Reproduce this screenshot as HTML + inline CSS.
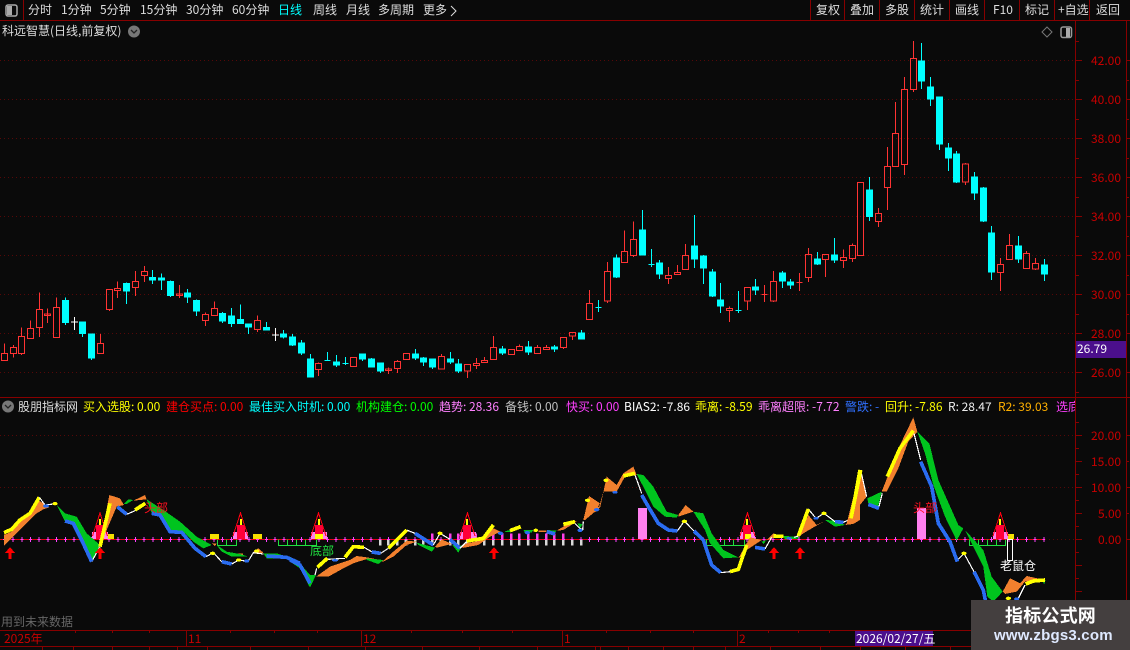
<!DOCTYPE html>
<html><head><meta charset="utf-8"><style>
html,body{margin:0;padding:0;background:#0a0a0a;width:1130px;height:650px;overflow:hidden}
#p{position:absolute;left:0;top:0;width:1130px;height:650px;overflow:hidden;background:#0a0a0a;font:12px/14px "WenQuanYi Zen Hei","Noto Sans CJK SC",sans-serif;color:#ddd}
#p span,#p b.t{position:absolute;white-space:nowrap;font-weight:normal}
svg{position:absolute;left:0;top:0}
.r{fill:none;stroke:#ff3333;stroke-width:3}
.c{fill:#0ff;stroke:#0ff;stroke-width:3}
.w{fill:none;stroke:#fff;stroke-width:3}
.o{fill:#f2802e}.g{fill:#00c41e}
.bl{fill:none;stroke:#2a6cf0;stroke-width:11;stroke-linejoin:round}
.y{fill:none;stroke:#ff0;stroke-width:11;stroke-linejoin:round}
.wl{fill:none;stroke:#fff;stroke-width:3.5}
.eb{fill:#2a6cf0}.ey{fill:#ff0}
.ax{color:#c80000}
#h{position:absolute;left:0;top:400px;width:1075px;height:14px;overflow:hidden}
</style></head><body><div id="p">

<svg width="1130" height="650" shape-rendering="crispEdges">
 <!-- grid -->
 <g stroke="#560808" stroke-dasharray="1 3" fill="none">
  <path d="M0 60.5H1075M0 99.5H1075M0 138.5H1075M0 177.5H1075M0 216.5H1075M0 255.5H1075M0 294.5H1075M0 333.5H1075M0 372.5H1075M0 435.5H1075M0 487.5H1075M1045 539.5H1075"/>
 </g>
 <!-- frame -->
 <g stroke="#870000" fill="none">
  <path d="M0 20.5H1130M0 397.5H1130M0 630.5H1130M0 646.5H1130M23.5 0V20M810.5 0V20M844.5 0V20M879.5 0V20M914.5 0V20M949.5 0V20M984.5 0V20M1019.5 0V20M1054.5 0V20M1089.5 0V20M1075.5 21V630M1126.5 21V650M186.5 630V646M361.5 630V646M562.5 630V646M737.5 630V646"/>
  <path d="M1075 60.5h7M1075 99.5h7M1075 138.5h7M1075 177.5h7M1075 216.5h7M1075 255.5h7M1075 294.5h7M1075 333.5h7M1075 372.5h7M1075 80.5h4M1075 119.5h4M1075 158.5h4M1075 197.5h4M1075 236.5h4M1075 275.5h4M1075 314.5h4M1075 353.5h4M1075 392.5h4M1075 41.5h4M1075 435.5h7M1075 461.5h7M1075 487.5h7M1075 513.5h7M1075 539.5h7M1075 565.5h7M1075 591.5h7M1075 422.5h4M1075 448.5h4M1075 474.5h4M1075 500.5h4M1075 526.5h4M1075 552.5h4M1075 578.5h4M1075 604.5h4M1127 60.5h3M1127 99.5h3M1127 138.5h3M1127 177.5h3M1127 216.5h3M1127 255.5h3M1127 294.5h3M1127 333.5h3M1127 372.5h3M1127 80.5h2M1127 119.5h2M1127 158.5h2M1127 197.5h2M1127 236.5h2M1127 275.5h2M1127 314.5h2M1127 435.5h3M1127 487.5h3M1127 539.5h3M1127 461.5h2M1127 513.5h2M75.5 630v3M112.5 630v3M149.5 630v3M230.5 630v3M274.5 630v3M317.5 630v3M411.5 630v3M462.5 630v3M512.5 630v3M606.5 630v3M650.5 630v3M693.5 630v3M768.5 630v3M798.5 630v3M829.5 630v3M42.5 646v4M73.5 646v4M112.5 646v4M149.5 646v4M177.5 646v4M207.5 646v4M250.5 646v4M308.5 646v4M365.5 646v4M422.5 646v4M479.5 646v4M537.5 646v4M595.5 646v4M600.5 646v4M628.5 646v4M663.5 646v4M693.5 646v4M725.5 646v4M770.5 646v4M820.5 646v4M860.5 646v4M905.5 646v4M950.5 646v4"/>
 </g>

 <!-- candles part 1 -->
 <g transform="translate(0 260) scale(.33333)">
  <path class="r" d="M13 250V280M4 280h18v22h-18zM40 255V262M31 262h18v19h-18zM40 281V293M64 202V229M55 229h18v52h-18zM64 281V285M91 181V205M82 205h18v31h-18zM118 97V148M109 148h18v55h-18zM118 203V231M142 145V189M133 162h18v5h-18zM169 112V142M160 142h18v91h-18zM301 222V250M292 250h18v31h-18zM319 88h18v61h-18zM328 149V153M352 64V85M343 85h18v7h-18zM352 92V114M406 33V64M397 64h18v19h-18zM406 83V108M433 18V34M424 34h18v13h-18zM433 47V66M538 75V114M529 102h18v5h-18zM616 157V163M607 163h18v19h-18zM616 182V198M643 124V145M634 145h18v22h-18zM772 166V181M763 181h18v28h-18zM772 209V216"/>
  <path class="c" d="M196 112V195M187 121h18v67h-18zM247 186V231M238 186h18v35h-18zM274 222V300M265 222h18v72h-18zM379 67V132M370 70h18v23h-18zM457 30V72M448 52h18v8h-18zM484 40V90M475 54h18v6h-18zM511 62V111M502 64h18v43h-18zM562 87V129M553 99h18v12h-18zM589 118V168M580 121h18v32h-18zM667 156V189M658 160h18v23h-18zM694 144V201M685 168h18v23h-18zM721 133V192M712 178h18v12h-18zM745 190V222M736 192h18v9h-18zM799 186V210M790 202h18v8h-18zM850 210V236M841 222h18v9h-18zM877 222V258M868 231h18v24h-18z"/>
  <path class="w" d="M223 171V210M213 186.5h21M826 204V243M816 225h21"/>
 </g>
 <!-- candles part 2 -->
 <g transform="translate(300 200) scale(.33333)">
  <path class="c" d="M5 420V465M-4 429h18v30h-18zM31 462V531M22 477h18v54h-18zM82 456V483M73 482h18M109 465V501M100 486h18v9h-18zM136 471V495M127 490h18M187 462V483M178 462h18v15h-18zM214 474V501M205 477h18v24h-18zM241 489V519M232 489h18v24h-18zM346 447V480M337 462h18v12h-18zM370 471V498M361 474h18v12h-18zM397 477V507M388 477h18v24h-18zM451 456V492M442 477h18v9h-18zM475 477V519M466 492h18v21h-18zM607 438V465M598 447h18v12h-18zM685 423V465M676 441h18v15h-18zM763 435V456M754 441h18v6h-18zM844 390V417M835 399h18v18h-18zM895 300V336M886 322h18"/>
  <path class="r" d="M55 488V490M46 490h18v19h-18zM55 509V528M151 472h18v28h-18zM265 502V522M256 507h18v5h-18zM292 480V484M283 484h18v22h-18zM292 506V519M310 460h18v19h-18zM424 462V469M415 469h18v38h-18zM493 493h18v20h-18zM502 513V534M529 474V490M520 490h18v7h-18zM529 497V507M553 471V481M544 481h18v7h-18zM580 408V442M571 442h18v37h-18zM625 448h18v16h-18zM658 433V439M649 439h18v13h-18zM712 435V442M703 442h18v19h-18zM739 435V442M730 442h18v7h-18zM781 412h18v31h-18zM790 443V447M808 397h18v11h-18zM817 408V420M868 270V310M859 310h18v49h-18z"/>
 </g>
 <!-- candles part 3 -->
 <g transform="translate(590 200) scale(.33333)">
  <path class="r" d="M52 186V214M43 214h18v89h-18zM52 303V309M103 91V154M94 154h18v34h-18zM130 64V118M121 118h18v49h-18zM130 167V171M235 201V226M226 226h18v9h-18zM235 235V252M262 195V217M253 217h18v7h-18zM286 132V166M277 166h18v43h-18zM418 319V325M409 325h18v7h-18zM418 332V366M463 262h18v41h-18zM472 303V330M523 255V306M514 284h18M550 213V244M541 244h18v59h-18zM550 303V306M628 219V273M619 247h18M655 144V163M646 163h18v70h-18zM655 233V246M697 163h18v16h-18zM706 179V231M760 148V172M751 172h18v10h-18zM760 182V204M787 130V136M778 136h18v40h-18zM787 176V186"/>
  <path class="c" d="M79 163V234M70 174h18v57h-18zM157 30V165M148 90h18v75h-18zM184 147V201M175 193h18M208 180V237M199 189h18v33h-18zM313 45V204M304 138h18v39h-18zM340 165V252M331 168h18v36h-18zM367 207V291M358 216h18v72h-18zM391 249V339M382 300h18v18h-18zM445 273V339M436 331h18M496 237V285M487 261h18v9h-18zM577 213V264M568 219h18v24h-18zM601 237V267M592 246h18v9h-18zM682 156V195M673 177h18v15h-18zM733 114V189M724 165h18v15h-18z"/>
 </g>
 <!-- candles part 4 -->
 <g transform="translate(830 30) scale(.33333)">
  <path class="r" d="M82 457h18v220h-18zM145 534V550M136 550h18v25h-18zM145 575V591M172 351V409M163 409h18v63h-18zM172 472V540M196 216V310M187 310h18v100h-18zM223 141V178M214 178h18v226h-18zM223 404V435M250 33V85M241 85h18v94h-18zM250 179V186M406 399V402M397 402h18v54h-18zM406 456V465M511 684V703M502 703h18v24h-18zM511 727V783M538 612V646M529 646h18v43h-18zM589 663V670M580 670h18v46h-18zM616 684V700M607 700h18v17h-18zM616 717V720"/>
  <path class="c" d="M118 441V573M109 480h18v80h-18zM274 39V177M265 93h18v60h-18zM301 141V228M292 171h18v36h-18zM328 201V360M319 201h18v141h-18zM355 339V423M346 354h18v30h-18zM379 363V459M370 372h18v84h-18zM433 426V510M424 441h18v48h-18zM460 471V576M451 474h18v99h-18zM484 588V750M475 609h18v117h-18zM565 618V699M556 648h18v39h-18zM643 687V753M634 705h18v27h-18z"/>
 </g>

 <!-- zero line -->
 <path d="M0 539.5H1045" stroke="#e00010"/>
 <path d="M3.8 539.5H1045" stroke="#ff40ff" stroke-width="5" stroke-dasharray="1 7.735"/>
 <path d="M2.8 539.5H1045" stroke="#ff40ff" stroke-dasharray="3 5.735"/>

 <!-- big pink bars -->
 <path d="M638 508h9v31h-9zM917 508h9v31h-9z" fill="#ff80ee"/>

 <!-- small bars -->
 <g transform="translate(290 480) scale(.33333)">
  <path fill="#d8d8d8" d="M267 180h8v16h-8zM291 180h8v16h-8zM318 180h8v16h-8zM344 180h8v16h-8zM372 180h8v16h-8zM396 180h8v16h-8zM423 180h8v16h-8zM449 180h8v16h-8zM477 180h8v16h-8zM501 180h8v16h-8zM528 180h8v16h-8zM553 180h8v16h-8zM579 180h8v16h-8zM606 180h8v16h-8zM633 180h8v16h-8zM660 180h8v16h-8zM684 180h8v16h-8zM711 180h8v16h-8zM738 180h8v16h-8zM765 180h8v16h-8zM789 180h8v16h-8zM816 180h8v16h-8zM843 180h8v16h-8zM870 180h8v16h-8z"/>
  <path fill="#ff40e8" d="M423 160h8v18h-8zM477 160h8v18h-8zM501 160h8v18h-8zM528 160h8v18h-8zM553 160h8v18h-8zM606 160h8v18h-8zM633 160h8v18h-8zM660 160h8v18h-8zM684 160h8v18h-8zM711 160h8v18h-8zM738 160h8v18h-8zM765 160h8v18h-8zM789 160h8v18h-8zM816 160h8v18h-8z"/>
 </g>

 <!-- green hollow boxes -->
 <path fill="none" stroke="#20e040" d="M217.5 539.5v6h19v-6M226.5 539.5v6M278.5 539.5v6h38v-6M287.5 539.5v6M296.5 539.5v6M305.5 539.5v6M706.5 539.5v6h38v-6M715.5 539.5v6M724.5 539.5v6M733.5 539.5v6M969.5 539.5v6h36v-6M978.5 539.5v6M987.5 539.5v6M996.5 539.5v6"/>

 <!-- gold squares -->
 <path fill="#f5e000" d="M106 534h8v5h-8zM210 534h9v5h-9zM253 534h9v5h-9zM1006 534h8v5h-8z"/>

 <!-- tents -->
 <g id="tents">
  <path fill="#ff80ee" d="M92 532h16v7H92zM233 532h15v7h-15zM311 532h16v7h-16zM460 532h16v7h-16zM740 532h15v7h-15zM993 532h15v7h-15z"/>
  <path fill="#ff0038" d="M96 525h8v14h-8zM237 525h8v14h-8zM315 525h8v14h-8zM463 525h8v14h-8zM743 525h8v14h-8zM996 525h8v14h-8z"/>
  <path fill="#ff0" d="M99 519h2v6h-2zM240 519h2v6h-2zM318 519h2v6h-2zM466 519h2v6h-2zM746 519h2v6h-2zM999 519h2v6h-2zM315 534h8v5h-8zM745 534h6v5h-6z"/>
  <path fill="none" stroke="#ff0010" d="M92.500 536L100 513L107.500 536M233 536L240.500 513L248 536M311 536L318.500 513L326 536M460 536L467.500 513L475 536M740 536L747.500 513L755 536M993 536L1000.500 513L1008 536"/>
 </g>

 <!-- ribbons -->
 <g transform="translate(0 480) scale(.33333)">
  <path class="o" d="M12 198L12 165L35 155L60 125L90 105L118 62L130 70L148 82L130 88L110 100L60 150Z"/>
  <path class="g" d="M170 75L195 100L230 110L260 160L300 195L275 245L250 190L225 135L195 125Z"/>
  <path class="o" d="M298 200L328 45L360 55L372 75L350 80L320 150Z"/>
  <path class="g" d="M372 72L385 58L400 60L380 72ZM440 58L490 90L540 125L590 170L635 195L610 205L580 185L550 155L510 158L495 125L480 105L455 100Z"/>
  <path class="o" d="M400 62L435 45L440 58ZM635 190L650 190L645 198ZM712 220L730 220L728 226ZM760 215L775 205L790 218L770 222Z"/>
  <path class="g" d="M650 195L680 215L720 222L745 230L695 230L665 215ZM790 220L830 220L860 230L900 262L860 235L800 235Z"/>
  <path class="y" d="M12 158L35 148L60 120L90 100L118 52"/>
  <path class="wl" d="M118 52L135 75L160 72M275 245L300 200M380 103L410 90M618 230L640 218L665 245M695 252L716 240L735 243M745 243L760 218L790 222"/>
  <ellipse class="eb" cx="138" cy="78" rx="9" ry="5"/><ellipse class="ey" cx="165" cy="71" rx="8" ry="5"/>
  <path class="bl" d="M195 123L220 130L245 180L275 245M352 80L380 103M455 100L480 105L510 155L545 157L585 205L618 230M665 245L695 252M800 228L860 232L900 250"/>
  <path class="y" d="M300 200L330 70M405 90L436 70"/>
  <ellipse class="ey" cx="638" cy="220" rx="8" ry="5"/><ellipse class="ey" cx="716" cy="240" rx="8" ry="5"/><ellipse class="eb" cx="740" cy="243" rx="7" ry="5"/>
  <ellipse class="ey" cx="770" cy="213" rx="8" ry="5"/>
 </g>
 <g transform="translate(290 480) scale(.33333)">
  <path class="g" d="M0 235L30 250L60 285L78 285L60 323L30 265L0 245Z"/>
  <path class="o" d="M78 290L120 260L180 240L200 228L230 232L280 242L310 215L350 182L380 185L350 195L310 230L280 245L230 237L190 250L160 265L115 290Z"/>
  <path class="g" d="M230 235L280 240L265 252L230 240ZM380 188L435 203L425 215L385 195ZM487 195L517 197L505 218ZM862 130L878 132L870 145Z"/>
  <path class="o" d="M435 200L455 178L485 192L440 203ZM517 197L530 190L580 180L610 145L632 155L600 170L565 195L517 204ZM800 152L850 122L860 125L820 150ZM880 120L897 48L930 70L915 95L885 120Z"/>
  <path class="g" d="M640 155L660 150L665 156ZM700 150L730 150L725 158L705 158ZM770 150L800 152L795 158Z"/>
  <path class="o" d="M745 151L770 151L768 156L745 156Z"/>
  <path class="bl" d="M0 240L30 255L60 310M245 216L272 220M375 160L430 195M480 178L510 205M770 155L795 162"/>
  <path class="wl" d="M75 285L80 265M112 238L165 235M222 202L245 215M272 220L295 205M350 150L375 160M430 195L450 160L480 178M510 205L530 185M850 125L870 145L878 150L880 125"/>
  <path class="y" d="M82 262L112 235M165 232L190 200L222 202M295 205L350 150M530 183L580 175L610 135M660 152L692 140M820 133L855 125"/>
  <ellipse class="eb" cx="135" cy="241" rx="9" ry="4"/><ellipse class="ey" cx="450" cy="160" rx="8" ry="5"/><ellipse class="eb" cx="632" cy="160" rx="8" ry="5"/><ellipse class="eb" cx="712" cy="158" rx="8" ry="5"/><ellipse class="ey" cx="737" cy="151" rx="7" ry="5"/><ellipse class="eb" cx="870" cy="151" rx="8" ry="5"/><ellipse class="ey" cx="893" cy="61" rx="8" ry="5"/><ellipse class="eb" cx="920" cy="88" rx="8" ry="5"/>
 </g>
 <g transform="translate(590 450) scale(.33333)">
  <path class="o" d="M0 145L30 175L50 80L80 105L100 70L130 50L140 75L105 80L80 125L40 125L25 180L0 195Z"/>
  <path class="g" d="M140 72L160 75L190 110L230 185L265 195L260 203L225 200L190 170L165 120Z"/>
  <path class="o" d="M265 195L287 165L310 185L265 200Z"/>
  <path class="g" d="M310 185L340 190L365 250L400 300L445 322L400 325L360 280L345 240Z"/>
  <path class="o" d="M445 325L480 262L515 270L470 300L460 315ZM530 270L550 250L580 260L545 265ZM625 262L655 195L680 225L700 215L640 250ZM765 225L790 205L810 75L810 210L790 222Z"/>
  <path class="g" d="M515 275L530 270L520 282ZM580 258L625 260L625 266L585 268ZM705 210L735 212L765 225L735 230Z"/>
  <path class="wl" d="M135 75L155 130M262 243L283 213L312 243M392 368L420 365M525 297L545 262M612 262L625 258M655 177L678 205L702 190L735 215M760 217L785 205"/>
  <path class="bl" d="M155 135L175 170L205 220L235 240L262 243M312 243L340 270L365 345L392 368M495 292L525 297M735 215L760 217"/>
  <path class="y" d="M100 78L135 70M420 365L445 358L470 285M550 258L580 259M625 258L655 177M785 200L810 60"/>
  <ellipse class="eb" cx="20" cy="179" rx="8" ry="5"/><ellipse class="eb" cx="75" cy="127" rx="8" ry="4"/><ellipse class="ey" cx="48" cy="91" rx="8" ry="5"/><ellipse class="ey" cx="283" cy="214" rx="8" ry="5"/><ellipse class="eb" cx="597" cy="265" rx="8" ry="4"/><ellipse class="eb" cx="678" cy="205" rx="8" ry="4"/><ellipse class="ey" cx="702" cy="190" rx="8" ry="5"/>
 </g>
 <g transform="translate(850 410) scale(.33333)">
  <path class="o" d="M-10 340L30 180L50 260L30 285L10 330ZM95 245L150 105L190 22L202 65L175 95L145 175L110 245Z"/>
  <path class="g" d="M52 265L95 245L85 288L55 280ZM202 65L238 100L265 210L325 345L340 355L320 392L285 320L250 225L225 130ZM345 360L400 420L425 500L458 545L430 575L412 560L400 470L375 420Z"/>
  <path class="o" d="M458 545L480 505L510 520L530 498L585 510L525 515L500 545L465 552Z"/>
  <path class="g" d="M575 512L587 510L583 522Z"/>
  <path class="wl" d="M32 180L50 260M87 290L97 250M192 70L212 150M322 450L342 430L372 485M505 565L525 525"/>
  <path class="bl" d="M55 283L87 295M212 155L245 230L265 340L300 395L322 455M372 485L400 540L410 590"/>
  <path class="y" d="M3 325L32 180M112 200L150 115L190 62M527 522L550 513L585 510"/>
  <ellipse class="ey" cx="342" cy="430" rx="8" ry="5"/><ellipse class="ey" cx="475" cy="565" rx="8" ry="5"/><ellipse class="eb" cx="500" cy="567" rx="8" ry="5"/>
 </g>

 <!-- mouse position bar -->
 <path fill="none" stroke="#fff" d="M1007.500 539.500h5v21h-5z"/>

 <!-- arrows -->
 <path fill="#ff0000" d="M10 547l5 6h-3.500v6h-3v-6H5zM100 547l5 6h-3.500v6h-3v-6H95zM494 547l5 6h-3.500v6h-3v-6H489zM774 547l5 6h-3.500v6h-3v-6H769zM800 547l5 6h-3.500v6h-3v-6H795z"/>

 <!-- icons -->
 <g shape-rendering="geometricPrecision">
  <rect x="6" y="5" width="11" height="11" rx="2" fill="none" stroke="#aaa" stroke-width="1.500"/><rect x="7" y="6" width="5" height="9" fill="#aaa"/>
  <circle cx="134" cy="31.500" r="6" fill="#777"/><path d="M131 30l3 3 3-3" fill="none" stroke="#222" stroke-width="1.300"/>
  <path d="M1047 27l5 5-5 5-5-5z" fill="none" stroke="#777"/>
  <rect x="1061" y="27" width="10.500" height="10.500" rx="2" fill="none" stroke="#999" stroke-width="1.500"/><rect x="1066" y="28" width="4" height="9" fill="#aaa"/>
  <circle cx="8" cy="406.500" r="6" fill="#777"/><path d="M5 405l3 3 3-3" fill="none" stroke="#222" stroke-width="1.300"/>
  <path d="M451 6l5 5-5 5" fill="none" stroke="#ddd"/>
 </g>

 <!-- price badge and date badge -->
 <rect x="1076" y="341" width="50" height="17" fill="#4b0f8c"/>
 <rect x="855" y="631" width="78" height="15" fill="#4b0f8c"/>
 <rect x="971" y="600" width="159" height="50" fill="#443f3f"/>
</svg>

<!-- toolbar -->
<span style="left:28px;top:3px">分时</span><span style="left:61px;top:3px">1分钟</span><span style="left:100px;top:3px">5分钟</span><span style="left:140px;top:3px">15分钟</span><span style="left:186px;top:3px">30分钟</span><span style="left:232px;top:3px">60分钟</span><span style="left:278px;top:3px;color:#0ff">日线</span><span style="left:313px;top:3px">周线</span><span style="left:346px;top:3px">月线</span><span style="left:378px;top:3px">多周期</span><span style="left:423px;top:3px">更多</span>
<span style="left:816px;top:3px">复权</span><span style="left:850px;top:3px">叠加</span><span style="left:885px;top:3px">多股</span><span style="left:920px;top:3px">统计</span><span style="left:955px;top:3px">画线</span><span style="left:993px;top:3px">F10</span><span style="left:1025px;top:3px">标记</span><span style="left:1058px;top:3px">+自选</span><span style="left:1096px;top:3px">返回</span>

<span style="left:2px;top:24px">科远智慧(日线,前复权)</span>

<!-- axis labels -->
<span class="ax" style="left:1091px;top:54px">42.00</span><span class="ax" style="left:1091px;top:93px">40.00</span><span class="ax" style="left:1091px;top:132px">38.00</span><span class="ax" style="left:1091px;top:171px">36.00</span><span class="ax" style="left:1091px;top:210px">34.00</span><span class="ax" style="left:1091px;top:249px">32.00</span><span class="ax" style="left:1091px;top:288px">30.00</span><span class="ax" style="left:1091px;top:327px">28.00</span><span class="ax" style="left:1091px;top:366px">26.00</span>
<span style="left:1077px;top:342px;color:#fff">26.79</span>
<span class="ax" style="left:1091px;top:429px">20.00</span><span class="ax" style="left:1091px;top:455px">15.00</span><span class="ax" style="left:1091px;top:481px">10.00</span><span class="ax" style="left:1098px;top:507px">5.00</span><span class="ax" style="left:1098px;top:533px">0.00</span>

<!-- indicator header -->
<div id="h">
<span style="left:18px;top:0;color:#ddd">股朋指标网</span>
<span style="left:83px;top:0;color:#ff0">买入选股: 0.00</span>
<span style="left:166px;top:0;color:#f00">建仓买点: 0.00</span>
<span style="left:249px;top:0;color:#0ff">最佳买入时机: 0.00</span>
<span style="left:356px;top:0;color:#0f0">机构建仓: 0.00</span>
<span style="left:439px;top:0;color:#ff80ff">趋势: 28.36</span>
<span style="left:505px;top:0;color:#c0c0c0">备钱: 0.00</span>
<span style="left:566px;top:0;color:#ff40ff">快买: 0.00</span>
<span style="left:624px;top:0;color:#fff">BIAS2: -7.86</span>
<span style="left:695px;top:0;color:#ff0">乖离: -8.59</span>
<span style="left:758px;top:0;color:#ff80ff">乖离超限: -7.72</span>
<span style="left:845px;top:0;color:#3070ff">警跌: -</span>
<span style="left:885px;top:0;color:#ff0">回升: -7.86</span>
<span style="left:948px;top:0;color:#eee">R: 28.47</span>
<span style="left:998px;top:0;color:#ffb000">R2: 39.03</span>
<span style="left:1056px;top:0;color:#ff40ff">选底</span>
</div>

<!-- chart labels -->
<span style="left:144px;top:501px;color:#ff1020">头部</span>
<span style="left:913px;top:501px;color:#ff1020">头部</span>
<span style="left:310px;top:544px;color:#20e040">底部</span>
<span style="left:1000px;top:559px;color:#fff">老鼠仓</span>
<span style="left:1px;top:615px;color:#666">用到未来数据</span>

<!-- bottom -->
<span class="ax" style="left:4px;top:632px">2025年</span>
<span class="ax" style="left:188px;top:632px">11</span>
<span class="ax" style="left:363px;top:632px">12</span>
<span class="ax" style="left:564px;top:632px">1</span>
<span class="ax" style="left:739px;top:632px">2</span>
<span style="left:856px;top:632px;color:#fff">2026/02/27/五</span>

<!-- watermark -->
<span style="left:1005px;top:604px;font-size:18px;line-height:22px;font-weight:bold;color:#fff;font-family:'Noto Sans CJK SC',sans-serif;letter-spacing:.2px">指标公式网</span>
<span style="left:994px;top:626px;font:bold 15px/20px 'Liberation Sans',sans-serif;color:#dfe9ff;letter-spacing:.2px">www.zbgs3.com</span>

</div></body></html>
